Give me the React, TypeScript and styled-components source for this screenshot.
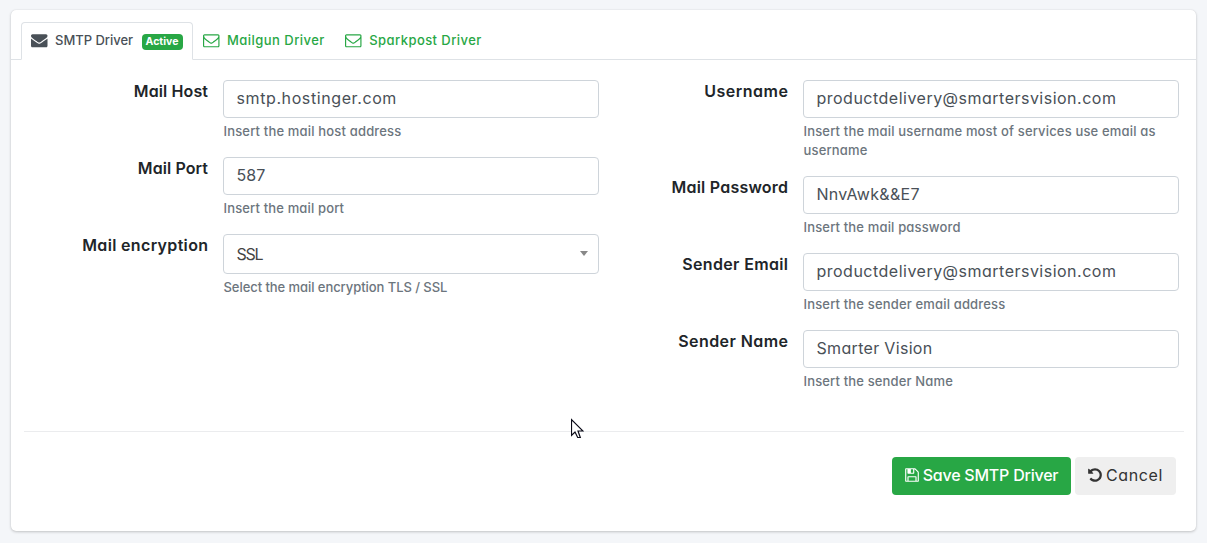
import React from 'react';
import styled, { createGlobalStyle } from 'styled-components';

const GlobalStyle = createGlobalStyle`
  * { box-sizing: border-box; }
  body {
    margin: 0;
    background: #f4f6f9;
    color: #212529;
    font: 400 16px/24px Inter, "Open Sans", sans-serif;
    font-feature-settings: 'cv11' 1;
  }
`;

const Page = styled.main`
  height: 543px;
  padding: 10px 11px 12px;
  overflow: hidden;
`;

const Card = styled.section`
  height: 521px;
  background: #fff;
  border-radius: 5px;
  box-shadow: 0 0 1px rgba(0, 0, 0, 0.125), 0 1px 3px rgba(0, 0, 0, 0.2);
`;

const Tabs = styled.nav`
  display: flex;
  height: 50px;
  padding: 12px 10px 0;
  border-bottom: 1px solid #dee2e6;
`;

const Tab = styled.a<{ $active?: boolean }>`
  display: flex;
  align-items: center;
  width: ${p => (p.$active ? '172px' : 'auto')};
  height: 38px;
  padding: 0 9.5px 2px 9px;
  border: 1px solid ${p => (p.$active ? '#dee2e6' : 'transparent')};
  border-bottom-color: ${p => (p.$active ? '#fff' : 'transparent')};
  border-radius: 4px 4px 0 0;
  background: ${p => (p.$active ? '#fff' : 'transparent')};
  color: ${p => (p.$active ? '#495057' : '#28a745')};
  font-size: 13px;
  font-weight: 450;
  white-space: nowrap;
`;

const Spaced = styled.span<{ $ls?: number }>`
  letter-spacing: ${p => p.$ls ?? 0}px;
`;

const TabIcon = styled.svg`
  flex: none;
  width: 16.5px;
  height: 16.5px;
  margin: 0 7.5px 0 0;
  fill: currentColor;
`;

const Badge = styled.span`
  flex: none;
  width: 41px;
  height: 16px;
  margin: 3px 0 0 auto;
  border-radius: 4px;
  background: #28a745;
  color: #fff;
  font-size: 10.5px;
  font-weight: 700;
  line-height: 16px;
  text-align: center;
`;

const Columns = styled.div`
  display: grid;
  grid-template-columns: 588px 580px;
  height: 371px;
  padding-top: 20px;
`;

const Column = styled.div`
  display: flex;
  flex-direction: column;
`;

const Group = styled.div`
  display: grid;
  grid-template-columns: 1fr 376px;
  column-gap: 15px;
  margin-bottom: 16px;
`;

const Label = styled.label<{ $ls: number }>`
  font-weight: 600;
  text-align: right;
  letter-spacing: ${p => p.$ls}px;
  margin-top: -1px;
  margin-right: ${p => -p.$ls}px;
`;

const Control = styled.div<{ $select?: boolean }>`
  display: flex;
  align-items: center;
  justify-content: space-between;
  height: ${p => (p.$select ? 40 : 38)}px;
  padding: 0 10px ${p => (p.$select ? 0 : 2)}px 12.5px;
  border: 1px solid #ced4da;
  border-radius: 4px;
  color: ${p => (p.$select ? '#444' : '#495057')};
`;

const Caret = styled.span`
  margin-bottom: 1px;
  border: 4px solid transparent;
  border-top: 5px solid #888;
  border-bottom: 0;
`;

const Help = styled.div<{ $ls: number }>`
  margin-top: 4px;
  padding-left: 0.5px;
  color: #6c757d;
  font-size: 13px;
  font-weight: 450;
  line-height: 19px;
  letter-spacing: ${p => p.$ls}px;
`;

const Footer = styled.footer`
  display: flex;
  justify-content: flex-end;
  gap: 4px;
  margin: 0 12px 0 13px;
  padding: 25px 8px 0 0;
  border-top: 1px solid #ebecee;
`;

const Button = styled.button<{ $primary?: boolean }>`
  display: flex;
  align-items: center;
  justify-content: center;
  gap: 4px;
  width: ${p => (p.$primary ? 179 : 101)}px;
  height: 38px;
  padding: 0 0 2px;
  border: 0;
  border-radius: 4px;
  background: ${p => (p.$primary ? '#28a745' : '#efefef')};
  color: ${p => (p.$primary ? '#fff' : '#333')};
  font: inherit;
  font-weight: ${p => (p.$primary ? 500 : 400)};
  font-feature-settings: inherit;
  white-space: nowrap;
`;

const ButtonIcon = styled.svg`
  width: 16px;
  height: 16px;
  margin: 0 -1px;
  fill: currentColor;
`;

const Pointer = styled.svg`
  position: absolute;
  left: 571px;
  top: 418px;
  width: 13px;
  height: 21px;
`;

const ENVELOPE =
  'M1792 710v794q0 66-47 113t-113 47h-1472q-66 0-113-47t-47-113v-794q44 49 101 87 362 246 497 345 57 42 92.5 65.5t94.5 48 110 24.5h2q51 0 110-24.5t94.5-48 92.5-65.5q170-123 498-345 57-39 100-87zm0-294q0 79-49 151t-122 123q-376 261-468 325-10 7-42.5 31t-54 38.5-52 32.5-57.5 27-50 9h-2q-23 0-50-9t-57.5-27-52-32.5-54-38.5-42.5-31q-91-64-262-182.5t-205-142.5q-62-42-117-115.5t-55-136.5q0-78 41.5-130t118.5-52h1472q65 0 112.5 47t47.5 113z';
const ENVELOPE_O =
  'M1664 1504v-768q-32 36-69 66-268 206-426 338-51 43-83 67t-86.5 48.5-102.5 24.5h-2q-48 0-102.5-24.5t-86.5-48.5-83-67q-158-132-426-338-37-30-69-66v768q0 13 9.5 22.5t22.5 9.5h1472q13 0 22.5-9.5t9.5-22.5zm0-1051v-24.5l-.5-13-3-12.5-5.5-9-9-7.5-14-2.5h-1472q-13 0-22.5 9.5t-9.5 22.5q0 168 147 284 193 152 401 317 6 5 35 29.5t46 37.5 44.5 31.5 50.5 27.5 43 9h2q20 0 43-9t50.5-27.5 44.5-31.5 46-37.5 35-29.5q208-165 401-317 54-43 100.5-115.5t46.5-131.5zm128-37v1088q0 66-47 113t-113 47h-1472q-66 0-113-47t-47-113v-1088q0-66 47-113t113-47h1472q66 0 113 47t47 113z';
const FLOPPY =
  'M512 1536h768v-384h-768v384zm896 0h128v-896q0-14-10-38.5t-20-34.5l-281-281q-10-10-34-20t-39-10v416q0 40-28 68t-68 28h-576q-40 0-68-28t-28-68v-416h-128v1280h128v-416q0-40 28-68t68-28h832q40 0 68 28t28 68v416zm-384-928v-320q0-13-9.5-22.5t-22.5-9.5h-192q-13 0-22.5 9.5t-9.5 22.5v320q0 13 9.5 22.5t22.5 9.5h192q13 0 22.5-9.5t9.5-22.5zm640 32v928q0 40-28 68t-68 28h-1344q-40 0-68-28t-28-68v-1344q0-40 28-68t68-28h928q40 0 88 20t76 48l280 280q28 28 48 76t20 88z';
const UNDO =
  'M1664 896q0 156-61 298t-164 245-245 164-298 61q-172 0-327-72.5t-264-204.5q-7-10-6.5-22.5t8.5-20.5l137-138q10-9 25-9 16 2 23 12 73 95 179 147t225 52q104 0 198.5-40.5t163.5-109.5 109.5-163.5 40.5-198.5-40.5-198.5-109.5-163.5-163.5-109.5-198.5-40.5q-98 0-188 35.5t-160 101.5l137 138q31 30 14 69-17 40-59 40h-448q-26 0-45-19t-19-45v-448q0-42 40-59 39-17 69 14l130 129q107-101 244.5-156.5t284.5-55.5q156 0 298 61t245 164 164 245 61 298z';

type FieldData = {
  label: string;
  value: string;
  help: string;
  select?: boolean;
  ls: [number, number, number];
};

const LEFT: FieldData[] = [
  { label: 'Mail Host', value: 'smtp.hostinger.com', help: 'Insert the mail host address', ls: [0.12, 0.6, 0.17] },
  { label: 'Mail Port', value: '587', help: 'Insert the mail port', ls: [0.1, 0.1, 0.15] },
  { label: 'Mail encryption', value: 'SSL', help: 'Select the mail encryption TLS / SSL', select: true, ls: [0.33, -1.3, -0.06] },
];

const RIGHT: FieldData[] = [
  { label: 'Username', value: 'productdelivery@smartersvision.com', help: 'Insert the mail username most of services use email as username', ls: [0.52, 0.49, 0.165] },
  { label: 'Mail Password', value: 'NnvAwk&&E7', help: 'Insert the mail password', ls: [0.22, 0.3, 0.16] },
  { label: 'Sender Email', value: 'productdelivery@smartersvision.com', help: 'Insert the sender email address', ls: [0.34, 0.49, 0.16] },
  { label: 'Sender Name', value: 'Smarter Vision', help: 'Insert the sender Name', ls: [0.42, 0.32, 0.15] },
];

const Field = ({ label, value, help, select, ls }: FieldData) => (
  <Group>
    <Label $ls={ls[0]}>{label}</Label>
    <div>
      <Control $select={select}>
        <Spaced $ls={ls[1]}>{value}</Spaced>
        {select && <Caret />}
      </Control>
      <Help $ls={ls[2]}>{help}</Help>
    </div>
  </Group>
);

export default function App() {
  return (
    <Page>
      <GlobalStyle />
      <Card>
        <Tabs>
          <Tab $active>
            <TabIcon viewBox="0 0 1792 1792"><path d={ENVELOPE} /></TabIcon>
            <Spaced $ls={-0.02}>SMTP Driver</Spaced>
            <Badge>Active</Badge>
          </Tab>
          <Tab>
            <TabIcon viewBox="0 0 1792 1792"><path d={ENVELOPE_O} /></TabIcon>
            <Spaced $ls={0.46}>Mailgun Driver</Spaced>
          </Tab>
          <Tab>
            <TabIcon viewBox="0 0 1792 1792"><path d={ENVELOPE_O} /></TabIcon>
            <Spaced $ls={0.43}>Sparkpost Driver</Spaced>
          </Tab>
        </Tabs>
        <Columns>
          <Column>{LEFT.map(f => <Field key={f.label} {...f} />)}</Column>
          <Column>{RIGHT.map(f => <Field key={f.label} {...f} />)}</Column>
        </Columns>
        <Footer>
          <Button $primary>
            <ButtonIcon viewBox="0 0 1792 1792"><path d={FLOPPY} /></ButtonIcon>
            <Spaced $ls={-0.22}>Save SMTP Driver</Spaced>
          </Button>
          <Button>
            <ButtonIcon viewBox="0 0 1792 1792"><path d={UNDO} /></ButtonIcon>
            <Spaced $ls={0.6}>Cancel</Spaced>
          </Button>
        </Footer>
      </Card>
      <Pointer viewBox="0 0 13 21">
        <path d="M.5 1.5V17.5L4 14l2.7 5.5h2.6L7 13h5z" fill="#fff" stroke="#0b0b18" strokeWidth="1.2" />
      </Pointer>
    </Page>
  );
}
